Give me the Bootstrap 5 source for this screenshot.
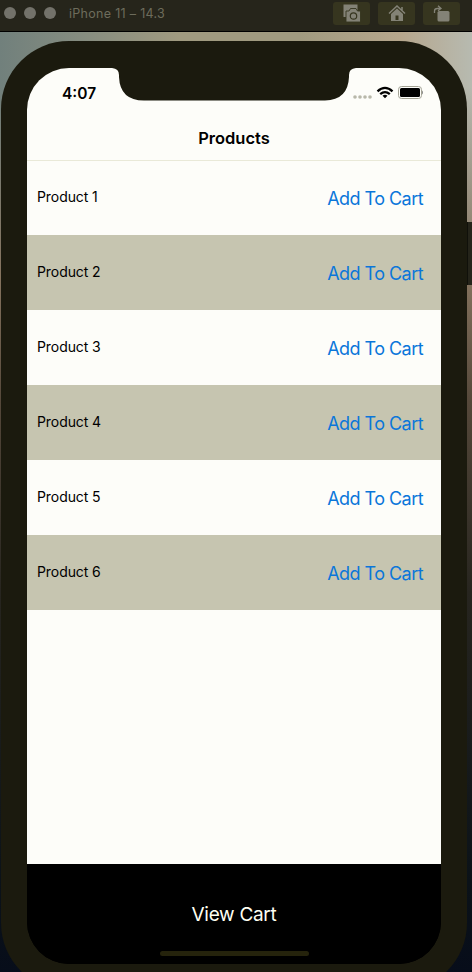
<!DOCTYPE html>
<html lang="en">
<head>
<meta charset="utf-8">
<meta name="viewport" content="width=device-width, initial-scale=1">
<title>Products</title>
<link href="https://cdn.jsdelivr.net/npm/bootstrap@5.3.0/dist/css/bootstrap.min.css" rel="stylesheet">
<style>
body{width:472px;height:972px;font-family:Inter,"Liberation Sans",sans-serif;color:#000;background:#111}
.titlebar{height:32px;background:#26251b;border-bottom:1px solid #000;padding:0 12px 5px 4px}
.light{width:12px;height:12px;background:#73726a}
.sim-name{font-size:12.5px;color:#6d6c5c;line-height:14px;margin-left:13px;letter-spacing:.3px;padding-top:1px}
.tool{width:37px;height:23px;background:#36351f;border-radius:3px;color:#838276}
.desk{height:940px;background:
 linear-gradient(180deg,transparent 0,transparent 55px,#85735e 245px,#55483a 370px,#27251f 560px,#0b1218 850px,#070d1a 940px),
 linear-gradient(90deg,#71807c 0,#858c80 80px,#a09a80 180px,#a09a80 300px,#b6a68c 400px,#b7bab0 472px);padding:9px 0 0 1px}
.phone{width:466px;height:950px;background:#1b1a0e;border-radius:68px;padding:27px 26px 0 26px}
.phone-screen{width:414px;height:896px;background:linear-gradient(#fdfdf9 796px,#000 796px);border-radius:42px}
.notch{left:85px;top:0}
.side-button{left:467px;top:222px;width:5px;height:63px;background:#25241a;border-left:1px solid #10100a}
.statusbar{height:44px;padding:0 17px 0 35px}
.status-icons{margin-top:17px;margin-right:1px}
.clock{font-size:15.5px;line-height:20px;margin-top:16px}
.nav-title{height:48px;font-size:16.5px;line-height:52px}
.nav-rule{height:1px;background:#e9e9d8}
.catalog{margin-top:-1px}
.product{height:75px;padding:0 18px 0 10px}
.product:nth-child(even){background:#c6c5b0}
.product-name{font-size:14px;line-height:20px;letter-spacing:-.08px;padding-bottom:1px}
.add{font-size:18px;line-height:24px;color:#0a76da;letter-spacing:-.55px;padding-top:2px}
.cart{height:100px;color:#fffff2;padding-top:38px}
.cart-label{font-size:19px;line-height:26px;letter-spacing:-.3px}
.home-indicator{width:149px;height:5px;background:#25230c;margin-top:23px}
</style>
<script src="https://cdn.jsdelivr.net/npm/bootstrap@5.3.0/dist/js/bootstrap.bundle.min.js"></script>
</head>
<body class="overflow-hidden position-relative">
<header class="titlebar d-flex align-items-center">
 <div class="d-flex gap-2"><i class="light rounded-circle"></i><i class="light rounded-circle"></i><i class="light rounded-circle"></i></div>
 <span class="sim-name">iPhone 11 – 14.3</span>
 <div class="d-flex gap-2 ms-auto">
  <div class="tool d-flex align-items-center justify-content-center"><svg width="19" height="18" viewBox="0 0 19 18"><path d="M1.500 .5h14v6H9L7 13H1.500z" fill="currentColor"/><path d="M4 7h3l1.500-2.500h5.500L15.500 7H18.500v11H4z" fill="currentColor" stroke="#36351f" stroke-width=".9"/><circle cx="11.500" cy="12" r="3.200" fill="none" stroke="#36351f" stroke-width="1.200"/></svg></div>
  <div class="tool d-flex align-items-center justify-content-center"><svg width="18" height="17" viewBox="0 0 18 17"><path d="M1 8.500 9 1l8 7.500M14 5.500V2" fill="none" stroke="currentColor" stroke-width="1.500"/><path d="m3 9 6-5.500L15 9v7H3z" fill="currentColor"/><path d="M7.500 10.500h3v4.500h-3z" fill="#36351f"/></svg></div>
  <div class="tool d-flex align-items-center justify-content-center"><svg width="18" height="17" viewBox="0 0 18 17"><rect x="4.500" y="6" width="12" height="10.500" rx="1.500" fill="currentColor"/><path d="M1.500 8V6q0-2.500 3-2.500h3M5 .8l3 2.700-3 2.200" fill="none" stroke="currentColor" stroke-width="1.300"/></svg></div>
 </div>
</header>
<main class="desk overflow-hidden">
 <div class="phone">
  <div class="phone-screen position-relative overflow-hidden d-flex flex-column">
   <svg class="notch position-absolute" width="244" height="33" viewBox="0 0 244 33"><path d="M0 0Q7 .5 7 7V9Q8 32.500 32 32.500H213Q236 32 237 9V7Q237 .5 244 0Z" fill="#1b1a0e"/></svg>
   <div class="statusbar d-flex justify-content-between">
    <span class="clock fw-semibold">4:07</span>
    <svg class="status-icons" width="72" height="16" viewBox="0 0 72 16">
     <g fill="#b8b8aa"><circle cx="4" cy="12" r="1.800"/><circle cx="9" cy="12" r="1.800"/><circle cx="14" cy="12" r="1.800"/><circle cx="19" cy="12" r="1.800"/></g>
     <g fill="none" stroke="#000" stroke-width="2.300"><path d="M26.500 6.300Q34 -.5 41.500 6.300M29.200 9.200Q34 5 38.800 9.200"/></g><path d="M31.500 10.800Q34 8.900 36.500 10.800L34 13.300z"/>
     <rect x="47.500" y="1.500" width="23" height="12" rx="3" fill="none" stroke="#a3a395"/><rect x="49" y="3" width="20" height="9" rx="1.500"/><path d="M71 5.500q1 .5 1 2t-1 2z" fill="#888"/>
    </svg>
   </div>
   <h1 class="nav-title text-center fw-semibold mb-0">Products</h1>
   <div class="nav-rule flex-shrink-0"></div>
   <div class="catalog flex-grow-1">
    <div class="product d-flex align-items-center justify-content-between"><span class="product-name">Product 1</span><span class="add">Add To Cart</span></div>
    <div class="product d-flex align-items-center justify-content-between"><span class="product-name">Product 2</span><span class="add">Add To Cart</span></div>
    <div class="product d-flex align-items-center justify-content-between"><span class="product-name">Product 3</span><span class="add">Add To Cart</span></div>
    <div class="product d-flex align-items-center justify-content-between"><span class="product-name">Product 4</span><span class="add">Add To Cart</span></div>
    <div class="product d-flex align-items-center justify-content-between"><span class="product-name">Product 5</span><span class="add">Add To Cart</span></div>
    <div class="product d-flex align-items-center justify-content-between"><span class="product-name">Product 6</span><span class="add">Add To Cart</span></div>
   </div>
   <div class="cart bg-black d-flex flex-column align-items-center"><span class="cart-label">View Cart</span><div class="home-indicator rounded-pill"></div></div>
  </div>
 </div>
</main>
<div class="side-button position-absolute"></div>
</body>
</html>
